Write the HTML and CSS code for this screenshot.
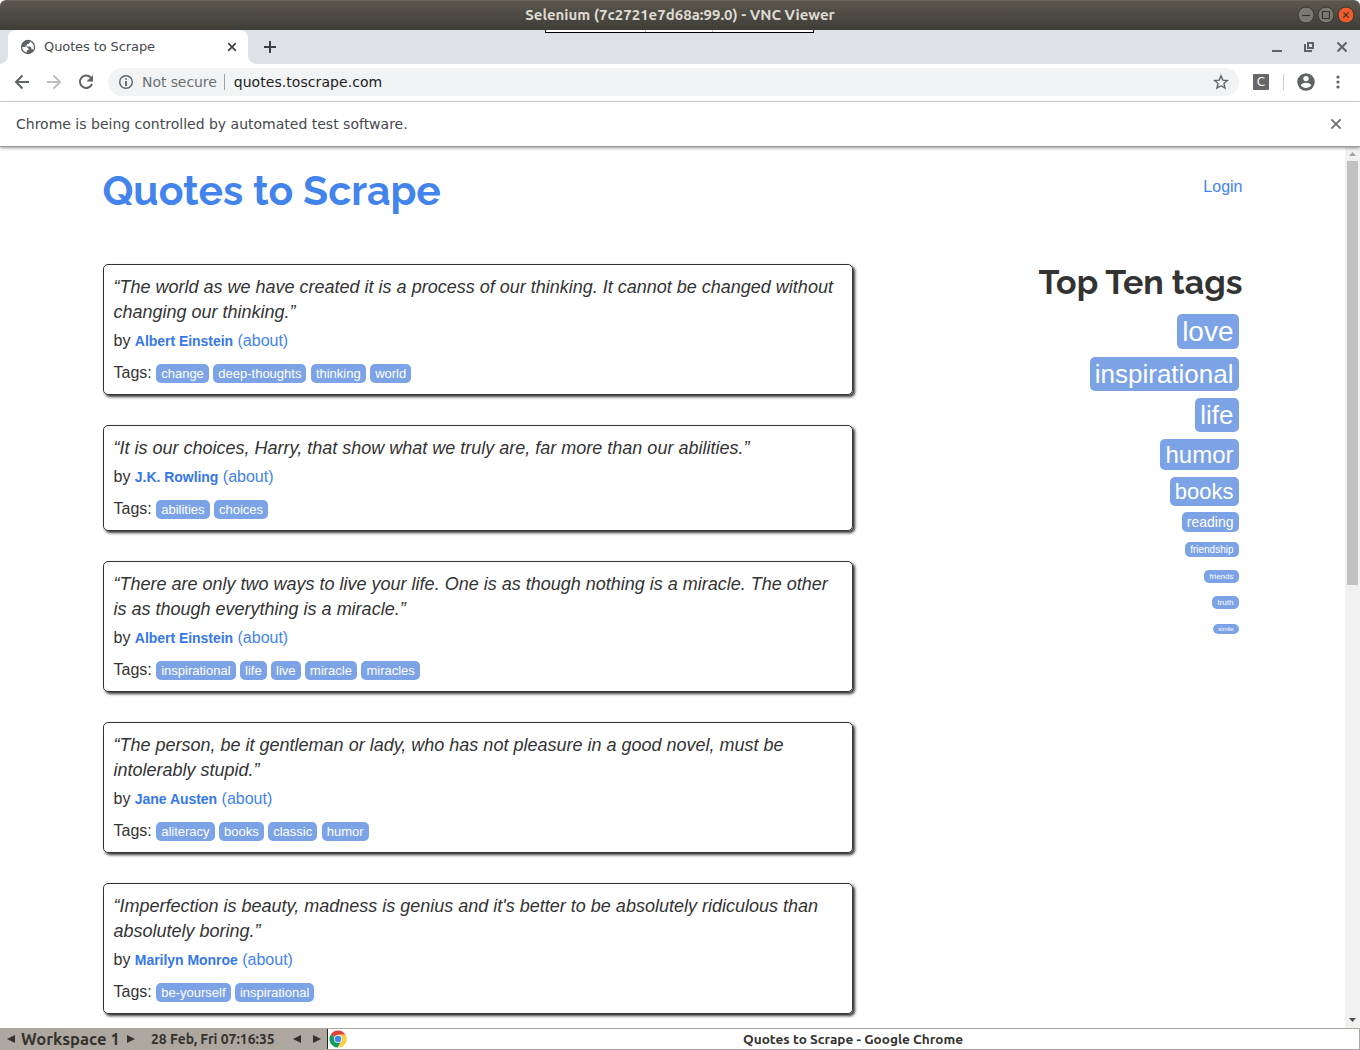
FILE: index.html
```html
<!DOCTYPE html>
<html lang="en">
<head>
<meta charset="utf-8">
<title>Quotes to Scrape</title>
<link rel="stylesheet" href="styles.css">
</head>
<body>
<header class="titlebar">
  <span class="window-title">Selenium (7c2721e7d68a:99.0) - VNC Viewer</span>
  <div class="window-buttons">
    <svg width="18" height="18" viewBox="0 0 18 18"><circle class="knob" cx="9" cy="9" r="8"/><path class="knob-mark" d="M5 9.5h8"/></svg>
    <svg width="18" height="18" viewBox="0 0 18 18"><circle class="knob" cx="9" cy="9" r="8"/><path class="knob-mark" d="M5.5 5.5h7v7h-7z"/></svg>
    <svg width="18" height="18" viewBox="0 0 18 18"><circle class="knob knob-close" cx="9" cy="9" r="8"/><path class="knob-mark" d="M6.3 6.3l5.4 5.4M11.7 6.3l-5.4 5.4"/></svg>
  </div>
</header>
<div class="tabstrip">
  <div class="vnc-handle"><i></i><i></i><i></i></div>
  <div class="tab">
    <svg class="globe" width="16" height="16" viewBox="0 0 16 16"><circle cx="8" cy="8" r="7.2" fill="#5f6368"/><path d="M2.200 8h4.600l1.700 1.500v1.700H6.800v2.300C4 13 2.200 11 2.200 8zM9.800 2.400v1.300L8.600 5H7v1.500H5.400V7.500H10l1.400 1.300v1.500h1.300l.6.500C14.800 7.800 13.400 3.700 9.800 2.400z" fill="#fff"/></svg>
    <span class="tab-title">Quotes to Scrape</span>
    <svg width="10" height="10" viewBox="0 0 10 10"><path d="M1.200 1.200l7.600 7.600M8.800 1.200l-7.600 7.600" stroke="#3c4043" stroke-width="1.700"/></svg>
  </div>
  <svg class="new-tab" width="14" height="14" viewBox="0 0 14 14"><path d="M7 1v12M1 7h12" stroke="#3c4043" stroke-width="2"/></svg>
  <div class="chrome-buttons">
    <svg width="12" height="12" viewBox="0 0 12 12"><path d="M1 10h10" stroke="#5f6368" stroke-width="2"/></svg>
    <svg width="12" height="12" viewBox="0 0 12 12"><path d="M5 2h5v5H5zM2 3v7h7" fill="none" stroke="#5f6368" stroke-width="2"/></svg>
    <svg class="close" width="12" height="12" viewBox="0 0 12 12"><path d="M1.500 1.500l9 9M10.500 1.500l-9 9" stroke="#5f6368" stroke-width="2"/></svg>
  </div>
</div>
<div class="toolbar">
  <svg width="16" height="16" viewBox="0 0 16 16"><path d="M15 8H2.500M8.500 1.500L2 8l6.500 6.500" fill="none" stroke="#5f6368" stroke-width="2"/></svg>
  <svg width="16" height="16" viewBox="0 0 16 16"><path d="M1 8h12.500M7.500 1.500L14 8l-6.500 6.500" fill="none" stroke="#bcbec0" stroke-width="2"/></svg>
  <svg width="16" height="16" viewBox="0 0 16 16"><path d="M12.700 3.500A6.200 6.200 0 1 0 14 9.800" fill="none" stroke="#5f6368" stroke-width="2"/><path d="M15 1v6.500H8.500z" fill="#5f6368"/></svg>
  <div class="omnibox">
    <svg width="16" height="16" viewBox="0 0 16 16"><circle cx="8" cy="8" r="6.300" fill="none" stroke="#5f6368" stroke-width="1.400"/><path d="M8 4.200v1.600M8 7v5" stroke="#5f6368" stroke-width="1.800"/></svg>
    <span class="security">Not secure</span>
    <span class="url">quotes.toscrape.com</span>
    <svg class="star" width="16" height="16" viewBox="0 0 16 16"><path d="M8 1.800l1.800 4.300 4.600.4-3.500 3 1.100 4.600L8 11.700l-4 2.400 1.100-4.600-3.500-3 4.600-.4z" fill="none" stroke="#5f6368" stroke-width="1.400"/></svg>
  </div>
  <span class="extension">C</span>
  <span class="divider"></span>
  <svg class="profile" width="18" height="18" viewBox="0 0 18 18"><circle cx="9" cy="9" r="8.700" fill="#5f6368"/><circle cx="9" cy="5.600" r="2.700" fill="#fff"/><path d="M3.800 12.300c.5-3.400 9.900-3.400 10.400 0-2 3.500-8.400 3.500-10.400 0z" fill="#fff"/></svg>
  <svg class="menu" width="4" height="14" viewBox="0 0 4 14"><g fill="#5f6368"><circle cx="2" cy="2" r="1.600"/><circle cx="2" cy="7" r="1.600"/><circle cx="2" cy="12" r="1.600"/></g></svg>
</div>
<div class="infobar">
  <span>Chrome is being controlled by automated test software.</span>
  <svg width="12" height="12" viewBox="0 0 12 12"><path d="M1.300 1.300l9.400 9.400M10.700 1.300l-9.400 9.400" stroke="#6b6e72" stroke-width="1.800"/></svg>
</div>
<div class="viewport">
  <main class="page">
    <div class="page-header">
      <h1>Quotes to Scrape</h1>
      <a class="login">Login</a>
    </div>
    <div class="columns">
      <section class="quotes">
        <article class="quote">
          <p class="text">“The world as we have created it is a process of our thinking. It cannot be changed without<br>changing our thinking.”</p>
          <p class="by">by <b>Albert Einstein</b> <a>(about)</a></p>
          <p class="tags">Tags: <a class="tag">change</a> <a class="tag">deep-thoughts</a> <a class="tag">thinking</a> <a class="tag">world</a></p>
        </article>
        <article class="quote">
          <p class="text">“It is our choices, Harry, that show what we truly are, far more than our abilities.”</p>
          <p class="by">by <b>J.K. Rowling</b> <a>(about)</a></p>
          <p class="tags">Tags: <a class="tag">abilities</a> <a class="tag">choices</a></p>
        </article>
        <article class="quote">
          <p class="text">“There are only two ways to live your life. One is as though nothing is a miracle. The other<br>is as though everything is a miracle.”</p>
          <p class="by">by <b>Albert Einstein</b> <a>(about)</a></p>
          <p class="tags">Tags: <a class="tag">inspirational</a> <a class="tag">life</a> <a class="tag">live</a> <a class="tag">miracle</a> <a class="tag">miracles</a></p>
        </article>
        <article class="quote">
          <p class="text">“The person, be it gentleman or lady, who has not pleasure in a good novel, must be<br>intolerably stupid.”</p>
          <p class="by">by <b>Jane Austen</b> <a>(about)</a></p>
          <p class="tags">Tags: <a class="tag">aliteracy</a> <a class="tag">books</a> <a class="tag">classic</a> <a class="tag">humor</a></p>
        </article>
        <article class="quote">
          <p class="text">“Imperfection is beauty, madness is genius and it's better to be absolutely ridiculous than<br>absolutely boring.”</p>
          <p class="by">by <b>Marilyn Monroe</b> <a>(about)</a></p>
          <p class="tags">Tags: <a class="tag">be-yourself</a> <a class="tag">inspirational</a></p>
        </article>
      </section>
      <aside class="top-tags">
        <h2>Top Ten tags</h2>
        <a class="cloud s28">love</a>
        <a class="cloud s26">inspirational</a>
        <a class="cloud s26">life</a>
        <a class="cloud s24">humor</a>
        <a class="cloud s22">books</a>
        <a class="cloud s14">reading</a>
        <a class="cloud s10">friendship</a>
        <a class="cloud s8">friends</a>
        <a class="cloud s8 truth">truth</a>
        <a class="cloud s6">simile</a>
      </aside>
    </div>
  </main>
  <div class="scrollbar">
    <svg width="15" height="14" viewBox="0 0 15 14"><path d="M4 9h7L7.500 5z" fill="#a3a3a3"/></svg>
    <div class="thumb"></div>
    <svg class="down" width="15" height="14" viewBox="0 0 15 14"><path d="M4 4h7L7.500 8z" fill="#505050"/></svg>
  </div>
</div>
<footer class="taskbar">
  <div class="panel">
    <svg width="8" height="8" viewBox="0 0 8 8"><path d="M0 4l8-4v8z"/></svg>
    <span class="workspace">Workspace 1</span>
    <svg width="8" height="8" viewBox="0 0 8 8"><path d="M8 4L0 0v8z"/></svg>
    <span class="clock">28 Feb, Fri 07:16:35</span>
    <svg class="prev" width="8" height="8" viewBox="0 0 8 8"><path d="M0 4l8-4v8z"/></svg>
    <svg class="next" width="8" height="8" viewBox="0 0 8 8"><path d="M8 4L0 0v8z"/></svg>
  </div>
  <div class="task">
    <svg width="18" height="18" viewBox="0 0 18 18"><path d="M9 9L1.600 4.700A8.600 8.600 0 0 1 16.500 4.700H9z" fill="#db4437"/><path d="M9 9L1.600 4.700A8.600 8.600 0 0 0 8.600 17.600L12.600 11z" fill="#0f9d58"/><path d="M9 4.700h7.500A8.600 8.600 0 0 1 8.600 17.600L12.700 11z" fill="#ffcd40"/><circle cx="9" cy="9" r="4.100" fill="#f1f1f1"/><circle cx="9" cy="9" r="3.200" fill="#4285f4"/></svg>
    <span>Quotes to Scrape - Google Chrome</span>
  </div>
</footer>
</body>
</html>
```
FILE: styles.css
```css
* { box-sizing: border-box; }
body {
  margin: 0;
  width: 1360px;
  height: 1050px;
  overflow: hidden;
  display: flex;
  flex-direction: column;
  background: #fff;
  font-family: "Liberation Sans", Arial, sans-serif;
}
svg { display: block; flex: none; }
h1, h2, p { margin: 0; }

.titlebar {
  position: relative;
  height: 30px;
  flex: none;
  display: flex;
  align-items: center;
  justify-content: center;
  border-radius: 6px 6px 0 0;
  border-top: 1px solid #66635b;
  background: linear-gradient(#5b574e, #3e3d38);
  color: #dfdbd2;
}
.window-title {
  padding-bottom: 2px;
  font: bold 15px/26px Ubuntu, "Noto Sans", sans-serif;
  white-space: nowrap;
}
.window-buttons {
  position: absolute;
  right: 5px;
  top: 5px;
  display: flex;
  gap: 2px;
}
.knob { fill: #7c7971; stroke: #35342f; }
.knob-close { fill: #ee5c2c; }
.knob-mark { fill: none; stroke: #35342f; stroke-width: 1.200; }

.tabstrip {
  position: relative;
  height: 34px;
  flex: none;
  display: flex;
  align-items: center;
  padding: 0 12px 0 8px;
  background: #dee1e6;
}
.vnc-handle {
  position: absolute;
  left: 545px;
  top: 0;
  width: 269px;
  height: 3px;
  display: flex;
  border: solid #000;
  border-width: 0 1px 1px;
  background: #fff;
}
.vnc-handle i { width: 100px; border-right: 1px solid #bbb; }
.vnc-handle i:nth-child(2) { width: 68px; }
.vnc-handle i:nth-child(3) { border: 0; }
.tab {
  position: relative;
  width: 240px;
  height: 34px;
  display: flex;
  align-items: center;
  padding: 0 11px 0 12px;
  border-radius: 8px 8px 0 0;
  background: #fff;
  font: 13px "DejaVu Sans", sans-serif;
  color: #45494d;
}
.tab::before, .tab::after {
  content: "";
  position: absolute;
  bottom: 0;
  width: 8px;
  height: 8px;
}
.tab::before { left: -8px; background: radial-gradient(circle at 0 0, transparent 7.500px, #fff 8px); }
.tab::after { right: -8px; background: radial-gradient(circle at 100% 0, transparent 7.500px, #fff 8px); }
.tab-title { flex: 1; margin-left: 8px; padding-bottom: 1px; letter-spacing: -.1px; }
.new-tab { margin-left: 15px; }
.chrome-buttons { margin-left: auto; display: flex; gap: 20px; }
.close { margin-left: 1px; }

.toolbar {
  height: 38px;
  flex: none;
  display: flex;
  align-items: center;
  padding: 0 20px 2px 14px;
  border-bottom: 1px solid #d5d7da;
  font: 14px "DejaVu Sans", sans-serif;
}
.toolbar > svg + svg { margin-left: 16px; }
.omnibox {
  width: 1131px;
  height: 28px;
  margin-left: 14px;
  display: flex;
  align-items: center;
  padding: 0 10px;
  border-radius: 14px;
  background: #f1f3f4;
}
.security {
  margin-left: 8px;
  padding-right: 7px;
  border-right: 1px solid #9aa0a6;
  color: #6b6f73;
  letter-spacing: -.080px;
}
.url { margin-left: 9px; letter-spacing: .060px; color: #202124; }
.star { margin-left: auto; }
.extension {
  width: 16px;
  height: 16px;
  margin-left: 14px;
  border-radius: 1px;
  background: #666;
  color: #f4f4f4;
  font-size: 12px;
  line-height: 16px;
  text-align: center;
}
.divider { width: 1px; height: 16px; margin: 0 13px 0 14px; background: #ccc; }
.toolbar > .profile + .menu { margin-left: auto; }

.infobar {
  position: relative;
  height: 45px;
  flex: none;
  display: flex;
  align-items: center;
  justify-content: space-between;
  padding: 0 18px 1px 16px;
  border-bottom: 1px solid #999;
  box-shadow: 0 1px 3px rgba(0, 0, 0, .4);
  font: 14px "DejaVu Sans", sans-serif;
  color: #45494d;
}

.viewport { height: 881px; flex: none; display: flex; overflow: hidden; }
.page {
  width: 1345px;
  padding: 0 102.5px;
  color: #333;
  font-size: 16px;
  line-height: 22px;
}
.page-header {
  height: 117px;
  display: flex;
  align-items: flex-start;
  justify-content: space-between;
}
h1, h2 { font-family: Raleway, Lato, sans-serif; font-weight: bold; white-space: nowrap; }
h1 { padding-top: 21px; font-size: 40.900px; line-height: 46px; color: #4383ec; }
.login { padding-top: 29px; }
a { color: #4383ec; }
.columns { display: flex; justify-content: space-between; }
.quotes { width: 750px; display: flex; flex-direction: column; gap: 30px; }
.quote {
  padding: 10px;
  border: 1px solid #333;
  border-radius: 5px;
  box-shadow: 2px 2px 3px #333;
}
.text { margin-bottom: 5px; font-size: 18px; line-height: 25px; font-style: italic; white-space: nowrap; }
.by { height: 22px; }
.by b { font-size: 14px; letter-spacing: -.040px; color: #3677e8; }
.tags { height: 22px; margin-top: 10px; }
.tag {
  padding: 2px 5px;
  border-radius: 5px;
  background: #7ca3e6;
  color: #fff;
  font-size: 13px;
}
.top-tags { display: flex; flex-direction: column; align-items: flex-end; }
h2 { height: 50px; font-size: 33.900px; line-height: 36px; }
.cloud {
  margin-right: 4px;
  padding: 0 5px;
  border-radius: 5px;
  background: #7ca3e6;
  color: #fff;
}
.s28 { margin-bottom: 8px; font-size: 28px; line-height: 35px; }
.s26 { margin-bottom: 7px; font-size: 26px; line-height: 34px; }
.s24 { margin-bottom: 7px; font-size: 24px; line-height: 31px; }
.s22 { margin-bottom: 6px; font-size: 22px; line-height: 29px; }
.s14 { margin-bottom: 10px; font-size: 14px; line-height: 20px; }
.s10 { margin-bottom: 13px; font-size: 10px; line-height: 15px; }
.s8 { margin-bottom: 13px; font-size: 8px; line-height: 13px; }
.truth { margin-bottom: 15px; }
.s6 { font-size: 6px; line-height: 10px; }

.scrollbar { width: 15px; display: flex; flex-direction: column; background: #f1f1f1; }
.thumb { width: 11px; height: 424px; margin-left: 2px; background: #c1c1c1; }
.down { margin-top: auto; }

.taskbar {
  height: 22px;
  flex: none;
  display: flex;
  background: #aea79f;
  color: #33322f;
  font-family: Ubuntu, "Noto Sans", sans-serif;
  font-weight: bold;
}
.panel { width: 327px; display: flex; align-items: center; padding-left: 7px; fill: #33322f; }
.workspace { width: 98px; margin: 0 8px 0 6px; font-size: 16.600px; line-height: 22px; white-space: nowrap; }
.clock { width: 124px; margin-left: 16px; font-size: 13.900px; line-height: 22px; white-space: nowrap; }
.prev { margin-left: 18px; }
.next { margin-left: 12px; }
.task {
  flex: 1;
  display: flex;
  align-items: center;
  margin: 1px 1px 1px 0;
  padding-left: 1px;
  border-left: 1px solid #222;
  background: #fff;
  font-size: 13.600px;
  line-height: 20px;
}
.task span { flex: 1; text-align: center; }
```
